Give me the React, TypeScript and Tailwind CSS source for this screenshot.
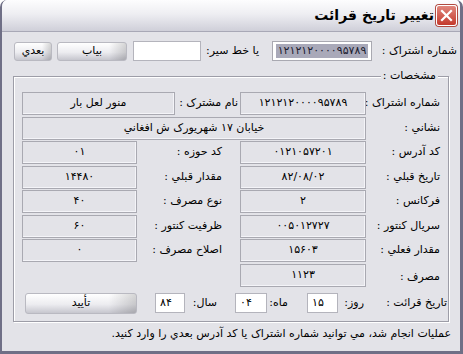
import React from "react";

const btn =
  "flex items-center justify-center rounded-[3px] border border-[#b9b9c1] text-[11px] text-black bg-[linear-gradient(to_right,rgba(0,0,0,0)_75%,rgba(0,0,0,0.16)),linear-gradient(to_bottom,#ffffff,#ececf0_55%,#c6c6ce)]";

function Ro({ children, w }: { children?: React.ReactNode; w: string }) {
  return (
    <div
      className={`h-full flex items-center justify-center border border-[#a9a9b1] shadow-[inset_-1px_-1px_0_#f4f4f8] text-[11px] text-black ${w}`}
    >
      {children}
    </div>
  );
}

function Num({ v }: { v: string }) {
  return <span dir="ltr">{v}</span>;
}

function Label({ children, w }: { children: React.ReactNode; w: string }) {
  return <div className={`h-full flex items-center text-[11px] text-black whitespace-nowrap ${w}`}>{children}</div>;
}

export default function App() {
  return (
    <div
      dir="rtl"
      className="w-[463px] h-[354px] flex flex-col bg-[#e3e3e8] border-l-2 border-r-[3px] border-b-[3px] border-[#6f6f86] rounded-t-[7px] overflow-hidden font-['DejaVu_Sans',sans-serif] text-black"
    >
      {/* title bar */}
      <div className="h-[32px] shrink-0 flex items-center pr-[3px] gap-[2px] bg-[linear-gradient(to_bottom,#fdfdfe,#eeeef2_45%,#cfcfd9)] border-b border-[#a8a8b6]">
        <div className="w-[21px] h-[21px] rounded-[3px] border border-white bg-[linear-gradient(to_bottom,#e0877d,#c4392c)] flex items-center justify-center shadow-[0_0_0_1px_#b04a40]">
          <svg width="13" height="13" viewBox="0 0 13 13">
            <path d="M2 2 L11 11 M11 2 L2 11" stroke="white" strokeWidth="2.2" strokeLinecap="square" />
          </svg>
        </div>
        <div className="text-[14px] font-bold text-black">تغيير تاريخ قرائت</div>
      </div>

      {/* top search row */}
      <div className="mt-[9px] h-[20px] flex items-center pr-[3px]">
        <Label w="w-[85px] justify-start">شماره اشتراک :</Label>
        <div className="w-[100px] h-[20px] bg-white border border-[#a9a9b1] flex items-center justify-center">
          <span dir="ltr" className="bg-[#a9a9b9] text-[11px] text-[#202030] px-[2px] leading-[14px]">
            ۱۲۱۲۱۲۰۰۰۰۹۵۷۸۹
          </span>
        </div>
        <Label w="w-[71px] pr-[13px]">يا خط سير:</Label>
        <div className="w-[68px] h-[20px] bg-white border border-[#b4b4bc]" />
        <div className="w-[6px]" />
        <div className={`${btn} w-[70px] h-[19px]`}>بياب</div>
        <div className="w-[5px]" />
        <div className={`${btn} w-[38px] h-[19px]`}>بعدي</div>
      </div>

      {/* group box */}
      <div className="relative mt-[15px] mx-[11px] h-[246px] border border-[#9d9da7] shadow-[inset_1px_1px_0_#ffffff,1px_1px_0_#ffffff] flex flex-col pt-[15px] pl-[8px]">
        <div className="absolute -top-[8px] right-[10px] px-[2px] bg-[#e3e3e8] text-[11px] leading-[14px]">مشخصات :</div>

        <div className="flex flex-col gap-[1.5px]">
          {/* row 1 */}
          <div className="h-[23px] flex">
            <Label w="w-[82px] pr-[8px]">شماره اشتراک :</Label>
            <Ro w="w-[126px]"><Num v="۱۲۱۲۱۲۰۰۰۰۹۵۷۸۹" /></Ro>
            <Label w="w-[65px] pr-[2px]">نام مشترک :</Label>
            <Ro w="w-[153px]">منور لعل بار</Ro>
          </div>
          {/* row 2 */}
          <div className="h-[23px] flex">
            <Label w="w-[82px] pr-[8px]">نشاني :</Label>
            <Ro w="w-[344px]">خيابان ۱۷ شهريورک ش افغاني</Ro>
          </div>
          {[
            ["کد آدرس :", "۰۱۲۱۰۵۷۲۰۱", "کد حوزه :", "۰۱"],
            ["تاريخ قبلي :", "۸۲/۰۸/۰۲", "مقدار قبلي :", "۱۴۴۸۰"],
            ["فرکانس :", "۲", "نوع مصرف :", "۴۰"],
            ["سريال کنتور :", "۰۰۵۰۱۲۷۲۷", "ظرفيت کنتور :", "۶۰"],
            ["مقدار فعلي :", "۱۵۶۰۳", "اصلاح مصرف :", "۰"],
          ].map((r) => (
            <div key={r[0]} className="h-[23px] flex">
              <Label w="w-[82px] pr-[8px]">{r[0]}</Label>
              <Ro w="w-[126px]"><Num v={r[1]} /></Ro>
              <Label w="w-[103px] pr-[18px]">{r[2]}</Label>
              <Ro w="w-[115px]"><Num v={r[3]} /></Ro>
            </div>
          ))}
          <div className="h-[23px] flex">
            <Label w="w-[82px] pr-[8px] pt-[4px]">مصرف :</Label>
            <Ro w="w-[126px]"><Num v="۱۱۲۳" /></Ro>
          </div>
        </div>

        {/* date row */}
        <div className="mt-[6px] h-[21px] flex items-center">
          <Label w="w-[84px] pr-[1px]">تاريخ قرائت :</Label>
          <Label w="w-[26px] pr-[0px]">روز:</Label>
          <div className="w-[31px] h-[20px] bg-white border border-[#b4b4bc] flex items-start justify-end px-[4px] pt-[1px] text-[11px]"><Num v="۱۵" /></div>
          <Label w="w-[40px] pr-[19px]">ماه:</Label>
          <div className="w-[32px] h-[20px] bg-white border border-[#b4b4bc] flex items-start justify-end px-[4px] pt-[1px] text-[11px]"><Num v="۰۴" /></div>
          <Label w="w-[50px] pr-[18px]">سال:</Label>
          <div className="w-[30px] h-[20px] bg-white border border-[#b4b4bc] flex items-start justify-end px-[4px] pt-[1px] text-[11px]"><Num v="۸۴" /></div>
          <div className="w-[18px]" />
          <div className={`${btn} w-[112px] h-[21px]`}>تأييد</div>
        </div>
      </div>

      {/* status */}
      <div className="mt-[5px] pr-[9px] text-[11px] leading-[14px] whitespace-nowrap">
        عمليات انجام شد، مي توانيد شماره اشتراک يا کد آدرس بعدي را وارد کنيد.
      </div>
    </div>
  );
}
